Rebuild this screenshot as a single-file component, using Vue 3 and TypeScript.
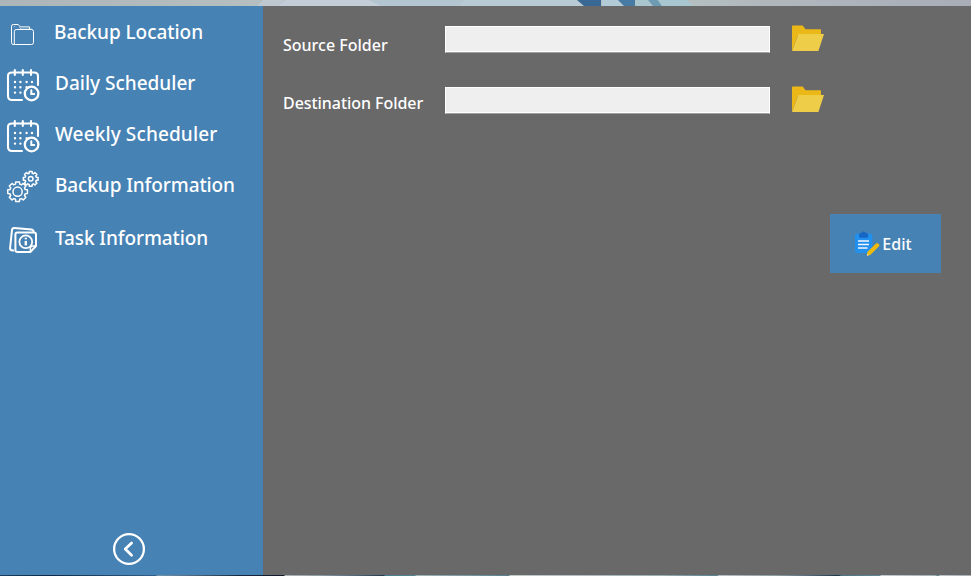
<script setup lang="ts">
import { ref } from 'vue'

type IconName = 'folder' | 'calendar' | 'gears' | 'info'
interface NavItem {
  label: string
  icon: IconName
  cls: string
}

const items: NavItem[] = [
  { label: 'Backup Location', icon: 'folder', cls: 'location' },
  { label: 'Daily Scheduler', icon: 'calendar', cls: 'daily' },
  { label: 'Weekly Scheduler', icon: 'calendar', cls: 'weekly' },
  { label: 'Backup Information', icon: 'gears', cls: 'backup-info' },
  { label: 'Task Information', icon: 'info', cls: 'task-info' },
]
const fields = ref([
  { id: 'source', label: 'Source Folder', path: '' },
  { id: 'destination', label: 'Destination Folder', path: '' },
])

// Outline of a cog with eight flat teeth
function gear(cx: number, cy: number, outer: number, inner: number): string {
  const pts: string[] = []
  const step = Math.PI / 4
  for (let i = 0; i < 8; i++) {
    const a = i * step
    for (const [d, r] of [[-0.27, inner], [-0.19, outer], [0.19, outer], [0.27, inner]]) {
      pts.push(`${(cx + r * Math.cos(a + d)).toFixed(2)} ${(cy + r * Math.sin(a + d)).toFixed(2)}`)
    }
  }
  return `M${pts.join('L')}Z`
}
const bigGear = gear(11.6, 21.7, 10, 7.9)
const smallGear = gear(24.7, 8.8, 7.5, 5.8)
</script>

<template>
  <div class="window">
    <div class="backdrop-top">
      <svg width="971" height="6" viewBox="0 0 971 6" preserveAspectRatio="none">
        <path d="M257 6L263 0H285L278 6Z" fill="#bfc7d0" />
        <path d="M278 6L286 0H369L382 6Z" fill="#c3cdd7" />
        <path d="M382 6L369 0H464L459 6Z" fill="#b3c5d0" />
        <path d="M459 6L464 0H577L584 6Z" fill="#b8cad4" />
        <path d="M577 0H601V6H584Z" fill="#3a6894" />
        <path d="M602 0H618L624 6H602Z" fill="#b3cbd7" />
        <path d="M618 0H635V6H624Z" fill="#477ba3" />
        <path d="M635 0H648L653 6H636Z" fill="#a9c6cf" />
        <path d="M648 0H658L662 6H653Z" fill="#6f9bb2" />
        <path d="M658 0H687L693 6H662Z" fill="#a9c7d0" />
      </svg>
    </div>
    <div class="body">
      <aside class="sidebar">
        <nav class="nav">
          <a v-for="item in items" :key="item.label" class="nav-item" :class="item.cls">
            <span class="nav-icon">
              <svg v-if="item.icon === 'folder'" width="34" height="34" viewBox="0 0 34 34" fill="none" stroke="#fff">
                <path d="M8 27.5H7.2Q5.5 27.5 5.5 25.5V9.3Q5.5 7.5 7.3 7.5H12.2L14.2 9.9H23.5V12" />
                <path d="M8.3 27V14.5Q8.3 12.5 10.3 12.5H25.5Q27.5 12.5 27.5 14.5V25.5Q27.5 27.5 25.5 27.5H7.5" />
                <path d="M8 10.3Q8 9.1 9.2 9.1M13 10L15 12H26" stroke-width=".7" opacity=".65" />
              </svg>
              <svg v-else-if="item.icon === 'calendar'" width="34" height="34" viewBox="0 0 34 34" fill="none" stroke="#fff" stroke-width="2.1" stroke-linecap="round">
                <path d="M16 32H6Q2 32 2 28V8Q2 4.5 6 4.5H28Q32 4.5 32 8V17" />
                <path d="M8.8 2V7M16.8 2V7M25 2V7" />
                <path d="M9 14h.01M14.4 14h.01M20.6 14h.01M26 14h.01M9 19.2h.01M14.4 19.2h.01M20.6 19.2h.01M9 24.6h.01M14.4 24.6h.01" stroke-width="2.4" />
                <circle cx="25.6" cy="25.5" r="6.8" stroke-width="2.3" />
                <path d="M25.3 22.3V26H28.2" stroke-width="2" />
              </svg>
              <svg v-else-if="item.icon === 'gears'" width="34" height="34" viewBox="0 0 34 34" fill="none" stroke="#fff" stroke-width="1.5" stroke-linejoin="round">
                <path :d="bigGear" />
                <circle cx="11.6" cy="21.7" r="4.6" />
                <path :d="smallGear" />
                <circle cx="24.7" cy="8.8" r="2.3" />
              </svg>
              <svg v-else width="34" height="34" viewBox="0 0 34 34" fill="none" stroke="#fff" stroke-width="2" stroke-linejoin="round">
                <path d="M8 27.5H6.5Q4 27.3 4.1 25L6 7Q6.3 4.8 8.5 5L25.5 6.6Q27.6 7 27.6 9.3" />
                <path d="M11.5 9.5H27.8Q30 9.5 30 11.5V23L24.3 29H11.5Q9.4 29 9.4 27V11.5Q9.4 9.5 11.5 9.5Z" />
                <path d="M24.3 29V25.6Q24.3 23 26.8 23H30" stroke-width="1.4" />
                <circle cx="19.8" cy="18.8" r="6.4" stroke-width="1.8" />
                <path d="M19.8 17.9V22.4" stroke-width="2.4" />
                <path d="M19.8 14.6V16.4" stroke-width="2.2" />
              </svg>
            </span>
            <span class="nav-label">{{ item.label }}</span>
          </a>
        </nav>
        <button class="back" type="button" aria-label="Back">
          <svg width="34" height="34" viewBox="0 0 34 34" fill="none" stroke="#fff">
            <circle cx="17" cy="17" r="14.9" stroke-width="2.3" />
            <path d="M19.6 11L13.2 17L19.6 23.2" stroke-width="2.7" stroke-linecap="round" stroke-linejoin="round" />
          </svg>
        </button>
      </aside>
      <main class="content">
        <div class="form">
          <div v-for="f in fields" :key="f.id" class="field" :class="f.id">
            <label class="field-label" :for="f.id">{{ f.label }}</label>
            <input :id="f.id" v-model="f.path" class="field-input" readonly />
            <button class="browse" type="button" aria-label="Browse">
              <svg width="32" height="27" viewBox="0 0 32 27">
                <path d="M0 1.2Q0 .4.8.4H10.7L13.5 4.2H28.2Q29 4.2 29 5V10H6L0 26Z" fill="#ebb817" />
                <path d="M6.4 9H32L26.4 26H0Z" fill="#eecd49" />
              </svg>
            </button>
          </div>
        </div>
        <button class="edit" type="button">
          <svg width="25" height="25" viewBox="0 0 25 25">
            <rect x="0" y="2.5" width="17.3" height="19.5" rx="2.5" fill="#2290ee" />
            <path d="M4 5.5V3.5Q4 2.3 5.2 2.3H6.2Q6.5.5 8.6.5T11 2.3H12Q13.2 2.3 13.2 3.5V5.5Q13 6.8 11.7 6.8H5.5Q4.1 6.8 4 5.5Z" fill="#1766c4" />
            <path d="M3 10.1H14M3 13.6H14M3 17.1H12.5" stroke="#f5f8fd" stroke-width="1.5" />
            <path d="M12 24.7L12.3 21L21 12.4Q22 11.5 23 12.4L24 13.3Q25 14.3 24 15.2L15.5 23.7Z" fill="#f0ba0c" />
            <path d="M12 24.7L12.2 22.4L14.2 24.2Z" fill="#f7dc9b" />
          </svg>
          <span>Edit</span>
        </button>
      </main>
    </div>
    <div class="backdrop-bottom"></div>
  </div>
</template>

<style>
body {
  margin: 0;
  overflow: hidden;
}
</style>

<style scoped>
.window {
  width: 971px;
  height: 576px;
  display: flex;
  flex-direction: column;
  font-family: 'Noto Sans', 'Open Sans', sans-serif;
  color: #fff;
}
.backdrop-top {
  height: 6px;
  background: linear-gradient(90deg, #acb5b8, #b5bfc0 257px, #b5bfc0 690px, #b1b8bd 760px, #a8adb8);
}
.backdrop-top svg {
  display: block;
}
.body {
  flex: 1;
  display: flex;
  min-height: 0;
}
.backdrop-bottom {
  height: 1px;
  background: linear-gradient(90deg, #183e60, #0f2944 50px, #31618a 156px, #7797af 157px, #16283f 240px, #101b2b 284px, #b0b5b8 285px, #8d9ca5 320px, #1d3c55 384px, #4d7d91 385px, #568391 415px, #a1b5bb 416px, #6e929c 480px, #55808e 509px, #c3cacc 510px, #9caeb3 660px, #55828f 717px, #b8c0c4 719px, #8999a2 780px, #183850 839px, #4b7485 841px, #608792 880px, #c5ccd0 881px, #a1b0b5 935px, #547985 938px, #c0c4c9 940px, #a5adb2);
}
.sidebar {
  width: 263px;
  flex: none;
  display: flex;
  flex-direction: column;
  justify-content: space-between;
  background: #4682b4;
}
.nav {
  display: flex;
  flex-direction: column;
}
.nav-item {
  height: 51px;
  display: flex;
  align-items: center;
  padding-left: 6px;
}
.nav-icon {
  width: 34px;
  height: 34px;
  margin-right: 15px;
  padding-top: 5px;
  flex: none;
}
.nav-icon svg {
  display: block;
}
.nav-label {
  font-size: 19px;
  font-weight: 500;
  line-height: 26px;
  white-space: nowrap;
}
.location .nav-label {
  margin-left: -1px;
  letter-spacing: -0.05px;
}
.weekly .nav-label {
  letter-spacing: 0.12px;
}
.backup-info .nav-label,
.task-info .nav-label {
  letter-spacing: -0.1px;
}
.task-info {
  margin-top: 2px;
}
button {
  border: 0;
  padding: 0;
  font: inherit;
  color: inherit;
  background: none;
}
.back {
  align-self: center;
  width: 34px;
  height: 34px;
  margin: 0 5px 9px 0;
}
.back svg {
  display: block;
}
.content {
  flex: 1;
  display: flex;
  flex-direction: column;
  background: #696969;
}
.form {
  display: flex;
  flex-direction: column;
  gap: 34px;
  padding: 19px 0 0 20px;
}
.field {
  display: flex;
  align-items: center;
  height: 27px;
}
.field-label {
  width: 162px;
  flex: none;
  font-size: 16px;
  font-weight: 500;
  line-height: 22px;
  padding-top: 13px;
  white-space: nowrap;
}
.destination .field-label {
  padding-top: 7px;
  letter-spacing: -0.05px;
}
.field-input {
  box-sizing: border-box;
  width: 325px;
  height: 27px;
  margin: 2px 22px 0 0;
  padding: 0 6px;
  border: 1px solid #fff;
  border-bottom-color: #a0a0a0;
  border-radius: 0;
  outline: 0;
  background: #efefef;
  box-shadow: inset 0 -1px #fff;
}
.browse {
  width: 32px;
  height: 27px;
}
.browse svg {
  display: block;
}
.edit {
  align-self: flex-end;
  display: flex;
  align-items: center;
  justify-content: center;
  gap: 2px;
  width: 111px;
  height: 59px;
  margin: 101px 30px 0 0;
  padding-right: 4px;
  box-sizing: border-box;
  background: #4682b4;
  font-size: 16px;
  font-weight: 500;
}
</style>
